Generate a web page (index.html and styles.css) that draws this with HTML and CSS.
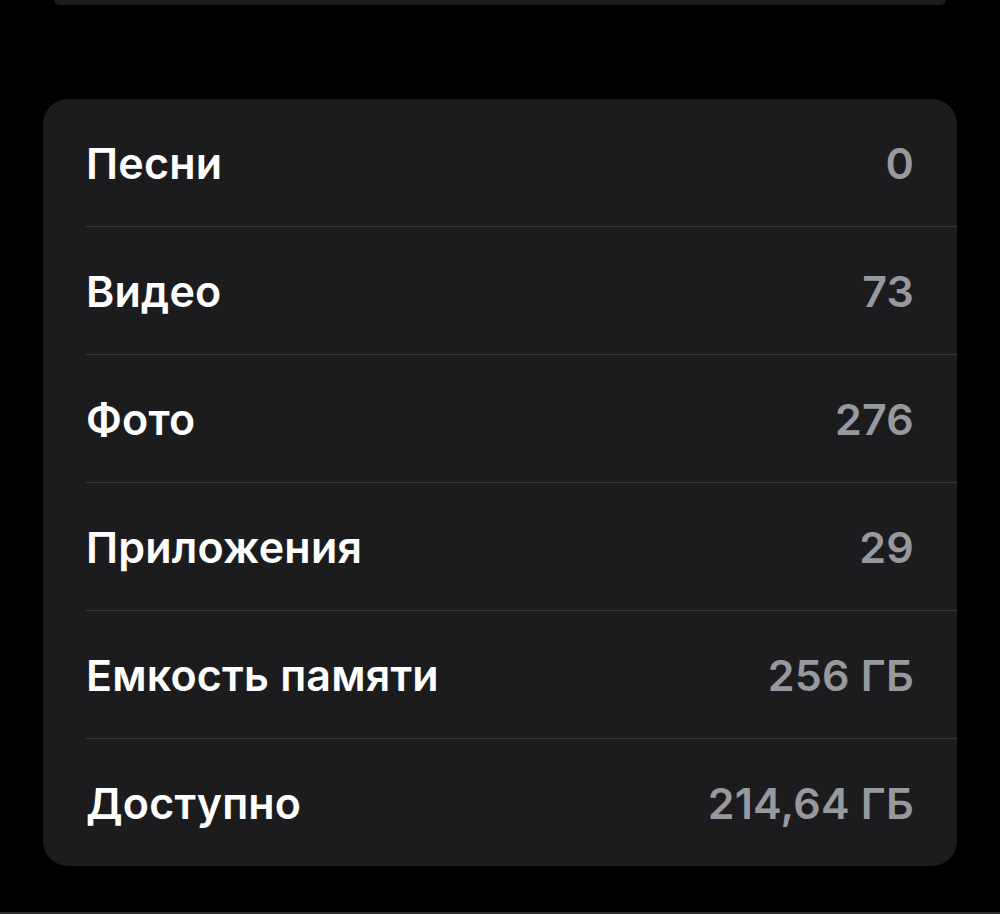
FILE: index.html
```html
<!DOCTYPE html>
<html lang="ru">
<head>
    <meta charset="UTF-8">
    <meta name="viewport" content="width=device-width, initial-scale=1.0">
    <title>Об этом устройстве</title>
    <link rel="stylesheet" href="styles.css">
</head>
<body>

    <div class="group group-prev"></div>

    <div class="group">
        <div class="row"><div class="row-inner"><span class="label">Песни</span><span class="value">0</span></div></div>
        <div class="row"><div class="row-inner"><span class="label">Видео</span><span class="value">73</span></div></div>
        <div class="row"><div class="row-inner"><span class="label">Фото</span><span class="value">276</span></div></div>
        <div class="row"><div class="row-inner"><span class="label">Приложения</span><span class="value">29</span></div></div>
        <div class="row"><div class="row-inner"><span class="label">Емкость памяти</span><span class="value">256 ГБ</span></div></div>
        <div class="row"><div class="row-inner"><span class="label">Доступно</span><span class="value">214,64 ГБ</span></div></div>
    </div>

    <div class="bottom-line"></div>

</body>
</html>
```

FILE: styles.css
```css
body { margin: 0; background-color: #000; font-family: Inter, "Liberation Sans", sans-serif; height: 914px; display: flex; flex-direction: column; overflow: hidden; }
.group { background-color: #1c1c1e; border-radius: 25px; margin: 0 43px; }
.group-prev { height: 5px; margin: 0 54px 94px; border-radius: 0 0 22px 22px; }
.row { padding-left: 43px; }
.row-inner { display: flex; align-items: center; justify-content: space-between; height: 127px; padding-right: 43px; border-bottom: 1px solid #38383a; }
.row:last-child .row-inner { border-bottom: none; }
.label { color: #fff; font-size: 43px; font-weight: 600; letter-spacing: 0.2px; }
.value { color: #98989f; font-size: 43px; font-weight: 600; letter-spacing: 0.2px; }
.bottom-line { margin-top: auto; height: 2px; background-color: #2c2c2e; }
```
